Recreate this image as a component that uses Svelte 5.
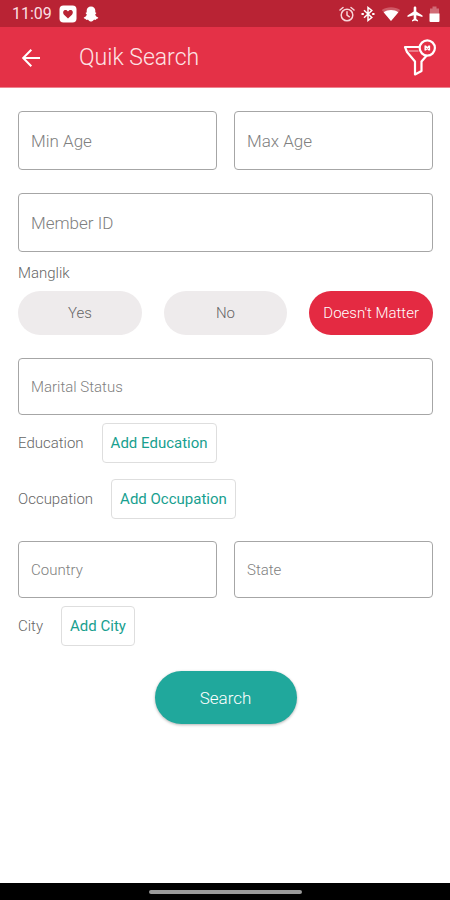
<script>
  let manglik = $state('matter');

  const options = [
    { value: 'yes', label: 'Yes' },
    { value: 'no', label: 'No' },
    { value: 'matter', label: "Doesn't Matter" }
  ];
</script>

<div class="screen">
  <div class="status">
    <span class="clock">11:09</span>
    <svg class="app-icon" viewBox="0 0 18 18" width="18" height="18" aria-hidden="true">
      <rect x="0.5" y="0.5" width="17" height="17" rx="4" fill="#fff" />
      <path d="M9 13.6 L5.3 10 C3.2 7.8 4.2 5 6.5 5 C7.7 5 8.5 5.7 9 6.5 C9.5 5.7 10.3 5 11.5 5 C13.8 5 14.8 7.8 12.7 10 Z" fill="#b92334" />
    </svg>
    <svg viewBox="0 0 16 16" width="16" height="16" aria-hidden="true">
      <path d="M8 0.5 C5.4 0.5 3.7 2.3 3.7 4.6 V6.6 C3.2 6.6 2.5 6.7 2.7 7.3 C2.9 7.9 3.8 8 3.8 8.5 C3.5 10 2.2 11 0.8 11.5 C0.6 12.5 1.8 12.8 2.7 13 C2.9 13.5 2.9 13.9 3.4 13.9 C4.3 13.9 5 13.7 5.8 14.4 C6.5 15 7.1 15.5 8 15.5 C8.9 15.5 9.5 15 10.2 14.4 C11 13.7 11.7 13.9 12.6 13.9 C13.1 13.9 13.1 13.5 13.3 13 C14.2 12.8 15.4 12.5 15.2 11.5 C13.8 11 12.5 10 12.2 8.5 C12.2 8 13.1 7.9 13.3 7.3 C13.5 6.7 12.8 6.6 12.3 6.6 V4.6 C12.3 2.3 10.6 0.5 8 0.5 Z" fill="#fff" />
    </svg>
    <div class="system">
      <svg viewBox="0 0 16 16" width="16" height="16" fill="none" stroke="#f8d5d9" stroke-width="1.5" stroke-linecap="round" aria-hidden="true">
        <circle cx="8" cy="9" r="5.8" />
        <path d="M1 4 L4 1.5 M15 4 L12 1.5 M8 5.8 V9.2 L10.4 10.8" />
      </svg>
      <svg viewBox="0 0 14 16" width="14" height="16" fill="none" stroke="#fff" stroke-width="1.5" aria-hidden="true">
        <path d="M3 4.3 L10.8 11.5 L7 14.5 V1.5 L10.8 4.5 L3 11.7" />
        <path d="M0.5 8 H2.8 M11.2 8 H13.5" stroke-width="2" />
      </svg>
      <svg viewBox="0 0 20 16" width="20" height="16" aria-hidden="true">
        <path d="M10 15 L0.8 4 C6 0.2 14 0.2 19.2 4 Z" fill="#cf5a67" />
        <path d="M10 15 L2.6 6.2 C7 3.4 13 3.4 17.4 6.2 Z" fill="#fff" />
      </svg>
      <svg viewBox="0 0 16 16" width="16" height="16" aria-hidden="true">
        <path d="M15.5 11 V9.5 L9.3 5.6 V1.8 C9.3 0.1 6.7 0.1 6.7 1.8 V5.6 L0.5 9.5 V11 L6.7 9.2 V13 L5 14.2 V15.4 L8 14.6 L11 15.4 V14.2 L9.3 13 V9.2 Z" fill="#fff" />
      </svg>
      <svg viewBox="0 0 11 16" width="11" height="16" aria-hidden="true">
        <path d="M1 2.5 H3.5 V0.5 H7.5 V2.5 H10 V8 H1 Z" fill="#d16b76" />
        <path d="M0.5 7.5 H10.5 V15 Q10.5 16 9.5 16 H1.5 Q0.5 16 0.5 15 Z" fill="#fff" />
      </svg>
    </div>
  </div>

  <header>
    <button class="icon-button" type="button" aria-label="Back">
      <svg viewBox="0 0 20 20" width="20" height="20" fill="none" stroke="#fff" stroke-width="2" aria-hidden="true">
        <path d="M19 10 H2.5 M10.3 1.8 L2.2 10 L10.3 18.2" />
      </svg>
    </button>
    <h1>Quik Search</h1>
    <button class="icon-button" type="button" aria-label="Clear filters">
      <svg viewBox="0 0 34 38" width="34" height="38" fill="none" stroke="#fff" stroke-width="2.2" stroke-linejoin="round" aria-hidden="true">
        <path d="M16.5 8 H2 L4 13 L12 22.5 V35.5 L18.5 32 V22.5 L23.5 16.8" />
        <path d="M5.5 12 H15.5" stroke-width="1.2" opacity="0.6" />
        <circle cx="24.3" cy="9" r="7.6" />
        <path d="M22.2 6.4 V11.6 M26.4 6.4 V11.6 M22.2 6.9 L26.4 11.1 M26.4 6.9 L22.2 11.1" stroke-width="1.5" />
      </svg>
    </button>
  </header>

  <form onsubmit={(event) => event.preventDefault()}>
    <div class="pair tall">
      <input type="text" inputmode="numeric" placeholder="Min Age" aria-label="Min Age" />
      <input type="text" inputmode="numeric" placeholder="Max Age" aria-label="Max Age" />
    </div>
    <div class="member tall">
      <input type="text" placeholder="Member ID" aria-label="Member ID" />
    </div>

    <fieldset>
      <legend>Manglik</legend>
      <div class="pills">
        {#each options as option (option.value)}
          <label class="pill" class:selected={manglik === option.value}>
            <input type="radio" name="manglik" value={option.value} bind:group={manglik} />
            {option.label}
          </label>
        {/each}
      </div>
    </fieldset>

    <div class="small">
      <input type="text" placeholder="Marital Status" aria-label="Marital Status" />
    </div>
    <div class="row">
      <span>Education</span>
      <button class="add" type="button">Add Education</button>
    </div>
    <div class="row spaced">
      <span>Occupation</span>
      <button class="add" type="button">Add Occupation</button>
    </div>

    <div class="pair small">
      <input type="text" placeholder="Country" aria-label="Country" />
      <input type="text" placeholder="State" aria-label="State" />
    </div>
    <div class="row">
      <span>City</span>
      <button class="add" type="button">Add City</button>
    </div>

    <button class="search" type="submit">Search</button>
  </form>

  <div class="nav"><div class="handle"></div></div>
</div>

<style>
  :global(body) {
    margin: 0;
    background: #fff;
  }

  .screen {
    display: flex;
    flex-direction: column;
    min-height: 100vh;
    font-family: Roboto, "Liberation Sans", sans-serif;
    font-weight: 300;
    color: #666;
  }

  .screen * {
    box-sizing: border-box;
  }

  svg {
    display: block;
    flex: none;
  }

  button,
  input {
    font: inherit;
  }

  .status {
    display: flex;
    align-items: center;
    height: 27px;
    padding: 0 10px 0 12px;
    background: #b92334;
    color: #fff;
    font-size: 16px;
    font-weight: 400;
  }

  .clock {
    color: #fbdfe2;
  }

  .app-icon {
    margin: 0 6px 0 7px;
  }

  .system {
    display: flex;
    align-items: center;
    gap: 6px;
    margin-left: auto;
  }

  header {
    display: flex;
    align-items: center;
    height: 61px;
    padding: 2px 13px 0 16px;
    background: #e43147;
    border-bottom: 1px solid #ee8490;
    color: #fff;
  }

  .icon-button {
    display: flex;
    align-items: center;
    justify-content: center;
    min-width: 30px;
    padding: 0;
    border: 0;
    background: none;
  }

  h1 {
    flex: 1;
    margin: 0 0 0 33px;
    font-size: 23px;
    font-weight: 300;
    line-height: 28px;
    color: #fde3e5;
  }

  form {
    flex: 1;
    padding: 23px 17px 0 18px;
  }

  .pair {
    display: grid;
    grid-template-columns: 1fr 1fr;
    gap: 17px;
  }

  input[type="text"] {
    display: block;
    width: 100%;
    min-width: 0;
    height: 57px;
    padding: 0 12px;
    border: 1px solid #a6a6a6;
    border-radius: 4px;
    background: #fff;
    color: #555;
    font-size: 15px;
    outline: none;
  }

  input::placeholder {
    color: #808080;
    opacity: 1;
  }

  .tall input[type="text"] {
    height: 59px;
    font-size: 17px;
  }

  .member {
    margin-top: 23px;
  }

  fieldset {
    margin: 11px 0 23px;
    padding: 0;
    border: 0;
  }

  legend {
    padding: 0;
    font-size: 15px;
    line-height: 20px;
  }

  .pills {
    display: grid;
    grid-template-columns: repeat(3, 1fr);
    gap: 22px;
    padding-top: 8px;
  }

  .pill {
    position: relative;
    display: flex;
    align-items: center;
    justify-content: center;
    height: 44px;
    border-radius: 22px;
    background: #eeebec;
    font-size: 15px;
    white-space: nowrap;
  }

  .pill input {
    position: absolute;
    opacity: 0;
  }

  .selected {
    background: #e42a42;
    color: #fff;
  }

  .row {
    display: flex;
    align-items: center;
    gap: 18px;
    padding-top: 8px;
    font-size: 15px;
  }

  .spaced {
    padding: 16px 0 22px;
  }

  .add {
    height: 40px;
    padding: 0 8px;
    border: 1px solid #dedede;
    border-radius: 4px;
    background: #fff;
    color: #18a08f;
    font-weight: 400;
  }

  .search {
    display: block;
    width: 142px;
    height: 53px;
    margin: 25px auto 0;
    border: 0;
    border-radius: 27px;
    background: #20a89c;
    box-shadow: 0 1px 3px rgba(0, 0, 0, 0.3);
    color: #fff;
    font-size: 17px;
  }

  .nav {
    display: flex;
    align-items: center;
    justify-content: center;
    height: 17px;
    background: #000;
  }

  .handle {
    width: 34%;
    height: 4px;
    border-radius: 2px;
    background: #999;
  }
</style>
